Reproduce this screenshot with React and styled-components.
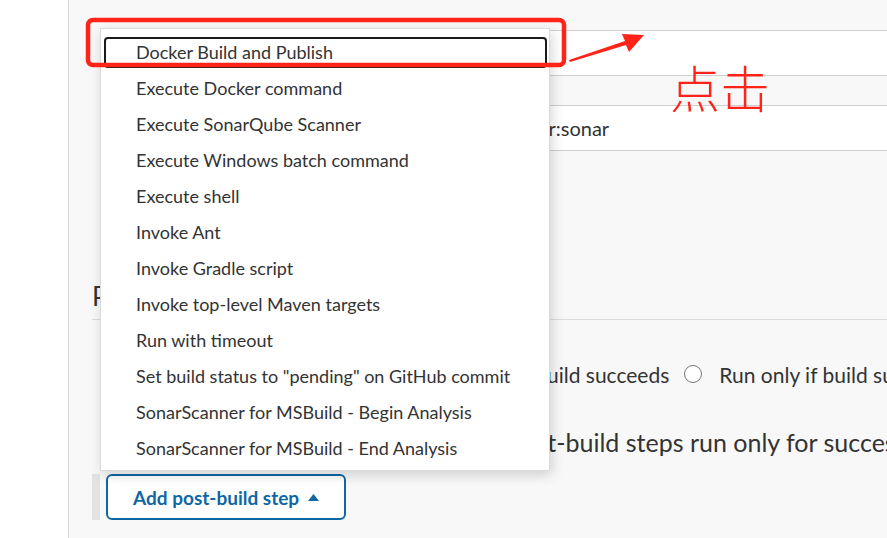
import React from "react";
import styled, { createGlobalStyle } from "styled-components";

const GlobalStyle = createGlobalStyle`
  html, body {
    margin: 0;
    padding: 0;
    background: #f8f8f8;
  }
  body {
    font-family: Lato, "Noto Sans", "Noto Sans CJK SC", sans-serif;
    color: #333;
  }
`;

const Page = styled.div`
  position: relative;
  display: flex;
  width: 887px;
  height: 538px;
  overflow: hidden;
  background: #f8f8f8;
`;

const Sidebar = styled.aside`
  width: 68px;
  flex: none;
  background: #fff;
  border-right: 1px solid #d6d6d6;
`;

const Main = styled.main`
  flex: 1;
  display: flex;
  flex-direction: column;
  padding: 30px 0 0 23px;
  min-width: 0;
`;

const Field = styled.div`
  height: 44px;
  margin: ${p => p.gap || 0}px -10px 0 12px;
  background: #fff;
  border-top: 1px solid #cfcfcf;
  border-bottom: 1px solid #cfcfcf;
  border-left: 1px solid #cfcfcf;
  display: flex;
  align-items: center;
  padding-left: ${p => p.indent || 12}px;
  font-size: 20px;
  white-space: nowrap;
`;

const SectionTitle = styled.h2`
  margin: 127px 0 0;
  padding-bottom: 5px;
  font-size: 26px;
  line-height: 36px;
  font-weight: 400;
  color: #333;
  border-bottom: 1px solid #dcdcdc;
`;

const RadioRow = styled.div`
  display: flex;
  align-items: center;
  margin-top: 39px;
  height: 30px;
  padding-left: ${p => p.indent}px;
  font-size: 21px;
  white-space: nowrap;
`;

const RadioOption = styled.label`
  display: flex;
  align-items: center;
  gap: 17px;
  margin-right: 15px;
`;

const RadioDot = styled.span`
  width: 16px;
  height: 16px;
  border: 1px solid #767676;
  border-radius: 50%;
  background: #fff;
  flex: none;
`;

const Description = styled.div`
  margin-top: 38px;
  height: 30px;
  line-height: 30px;
  padding-left: ${p => p.indent}px;
  font-size: 25px;
  white-space: nowrap;
`;

const ButtonRow = styled.div`
  position: relative;
  margin-top: 17px;
  display: flex;
  align-items: stretch;
  gap: 6px;
  height: 46px;
`;

const Strip = styled.span`
  width: 8px;
  background: #e3e3e3;
`;

const AddButton = styled.button`
  display: flex;
  align-items: center;
  gap: 9px;
  padding: 0 25px 0 25px;
  background: #fff;
  border: 2px solid #0f67a6;
  border-radius: 6px;
  color: #0f67a6;
  font-family: Lato, "Noto Sans", sans-serif;
  font-weight: 700;
  font-size: 19px;
  cursor: pointer;
`;

const Menu = styled.ul`
  position: absolute;
  left: 8px;
  bottom: calc(100% + 3px);
  width: 450px;
  margin: 0;
  padding: 5px 0 4px;
  list-style: none;
  background: #fff;
  border: 1px solid #dadada;
  box-sizing: border-box;
  box-shadow: 2px 4px 12px rgba(0, 0, 0, 0.16);
  z-index: 2;
`;

const MenuItem = styled.li`
  position: relative;
  height: 36px;
  line-height: 37px;
  padding-left: 35px;
  font-size: 18px;
  color: #333;
  white-space: nowrap;
  &[data-focus="true"]::after {
    content: "";
    position: absolute;
    inset: 3px 2px 2px 3px;
    border: 2px solid #1b1b1b;
    border-radius: 4px;
  }
`;

const Overlay = styled.svg`
  position: absolute;
  left: 0;
  top: 0;
  pointer-events: none;
  z-index: 5;
`;

const Note = styled.span`
  position: absolute;
  left: 670px;
  top: 61px;
  font-family: "Noto Sans CJK SC", sans-serif;
  font-size: 50px;
  font-weight: 300;
  line-height: 1;
  color: #ff2318;
  z-index: 5;
`;

const items = [
  "Docker Build and Publish",
  "Execute Docker command",
  "Execute SonarQube Scanner",
  "Execute Windows batch command",
  "Execute shell",
  "Invoke Ant",
  "Invoke Gradle script",
  "Invoke top-level Maven targets",
  "Run with timeout",
  'Set build status to "pending" on GitHub commit',
  "SonarScanner for MSBuild - Begin Analysis",
  "SonarScanner for MSBuild - End Analysis",
];

export default function App() {
  return (
    <Page>
      <GlobalStyle />
      <Sidebar />
      <Main>
        <Field />
        <Field gap={29} indent={295}>clean install sonar:sonar</Field>
        <SectionTitle>Post Steps</SectionTitle>
        <RadioRow indent={305}>
          <RadioOption>
            <RadioDot />
            Run only if build succeeds
          </RadioOption>
          <RadioOption>
            <RadioDot />
            Run only if build succeeds or is unstable
          </RadioOption>
          <RadioOption>
            <RadioDot />
            Run regardless of build result
          </RadioOption>
        </RadioRow>
        <Description indent={292}>
          Should the post-build steps run only for successful builds, etc.
        </Description>
        <ButtonRow>
          <Strip />
          <AddButton>
            Add post-build step
            <svg width="11" height="7" viewBox="0 0 11 7">
              <path d="M0 7 L5.5 0 L11 7 Z" fill="#0f67a6" />
            </svg>
          </AddButton>
          <Menu>
            {items.map((t, i) => (
              <MenuItem key={t} data-focus={i === 0 ? "true" : "false"}>
                {t}
              </MenuItem>
            ))}
          </Menu>
        </ButtonRow>
      </Main>
      <Overlay width="887" height="538" viewBox="0 0 887 538">
        <rect x="88" y="20" width="476" height="45" rx="5" fill="none" stroke="#ff2318" strokeWidth="4.5" />
        <path d="M570 62 L626 45 L629 52 L644 35 L622 34 L625 41 L569 60 Z" fill="#ff2318" />
      </Overlay>
      <Note>点击</Note>
    </Page>
  );
}
